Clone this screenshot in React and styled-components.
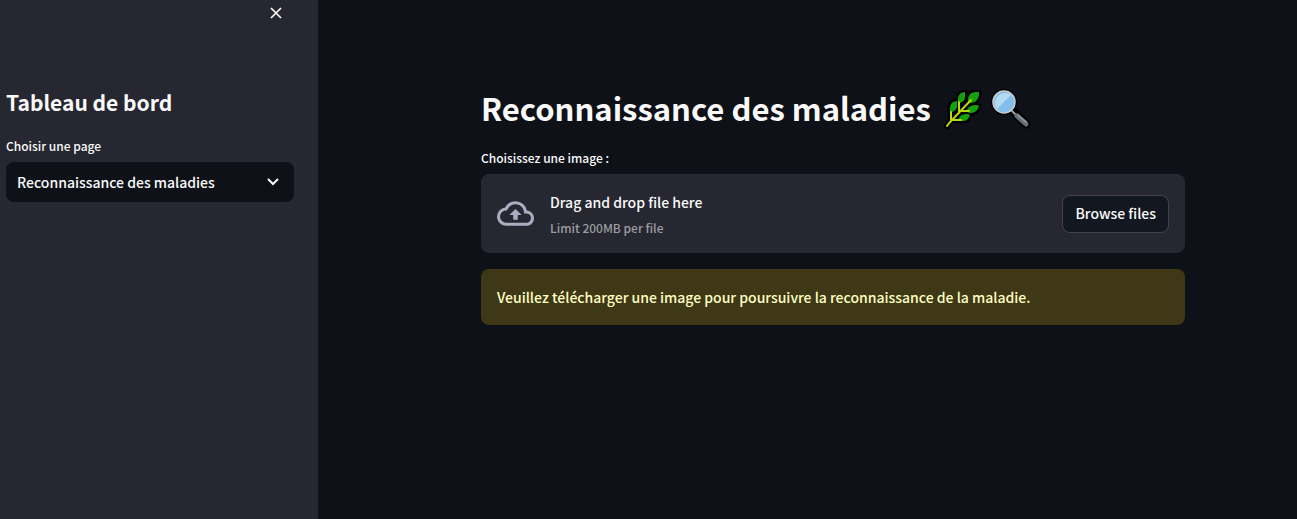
import React from "react";
import styled, { createGlobalStyle } from "styled-components";

const GlobalStyle = createGlobalStyle`
  *, *::before, *::after { box-sizing: border-box; }
  body {
    margin: 0;
    background: #0e1117;
    color: #fafafa;
    font-family: "Source Sans Pro", "Noto Sans CJK SC", "Noto Sans", sans-serif;
    font-size: 14px;
    font-weight: 500;
    line-height: 24px;
  }
  button, select { font: inherit; color: inherit; }
`;

const Layout = styled.div`
  display: flex;
  min-height: 100vh;
`;

const Sidebar = styled.aside`
  flex: 0 0 318px;
  padding: 0 24px 24px 6px;
  background: #262730;
`;

const SidebarHeader = styled.div`
  display: flex;
  justify-content: flex-end;
  height: 88px;
  padding-right: 8px;
`;

const CloseButton = styled.button`
  display: flex;
  align-items: center;
  justify-content: center;
  width: 20px;
  height: 26px;
  padding: 0;
  border: 0;
  background: transparent;
  cursor: pointer;
`;

const SidebarTitle = styled.h2`
  margin: 0 0 18px;
  font-size: 21px;
  line-height: 28px;
  font-weight: 700;
`;

const Label = styled.label`
  display: block;
  margin-bottom: 4px;
  font-size: 12px;
  line-height: 24px;
`;

const SelectBox = styled.div`
  position: relative;
`;

const Select = styled.select`
  display: block;
  width: 100%;
  height: 40px;
  padding: 0 40px 0 11px;
  border: 0;
  border-radius: 8px;
  background: #0e1117;
  appearance: none;
  cursor: pointer;
`;

const Chevron = styled.svg`
  position: absolute;
  right: 15px;
  top: 14px;
  pointer-events: none;
`;

const Main = styled.main`
  flex: 1;
  min-width: 0;
  padding: 84px 0 24px 51px;
`;

const Content = styled.div`
  max-width: 704px;
  margin: 0 auto;
`;

const Title = styled.h1`
  display: flex;
  align-items: center;
  gap: 6px;
  margin: 0 0 14px;
  font-size: 31px;
  line-height: 48px;
  font-weight: 700;
`;

const TitleText = styled.span`
  margin-right: 6px;
`;

const Dropzone = styled.section`
  display: flex;
  align-items: center;
  padding: 16px;
  margin-bottom: 16px;
  border-radius: 8px;
  background: #262730;
`;

const CloudIcon = styled.svg`
  flex: none;
  margin-right: 16px;
  fill: #a9aec1;
`;

const Instructions = styled.div`
  flex: 1;
`;

const Prompt = styled.div`
  line-height: 24px;
`;

const Limit = styled.div`
  padding-top: 5px;
  font-size: 12px;
  line-height: 18px;
  color: #9c9da1;
`;

const BrowseButton = styled.button`
  height: 38px;
  padding: 0 12px 2px;
  border: 1px solid #41434b;
  border-radius: 8px;
  background: #131720;
  cursor: pointer;
`;

const Warning = styled.div`
  padding: 16px;
  border-radius: 8px;
  background: #3e3816;
  color: #ffffc2;
`;

function Herb() {
  const leaves =
    "M36 6v3q-1 7-8 8h-3v-4q1-7 8-7ZM22 6v6q-1 4-5 5h-2v-5q1-6 7-6ZM14 15v6q-1 4-5 5H7v-5q1-6 7-6ZM36 20q-2 7-8 7-3 0-5-2 3-6 9-6 3 0 4 1ZM27 29q-2 6-7 6-4 0-5-1 2-6 8-6 3 0 4 1Z";
  const stem = "M4 40Q6 37 9 34L28 14M8 34V26M16 26V16M17 25H26M9 34H18";
  return (
    <svg width="40" height="44" viewBox="0 0 40 44" role="img" aria-label="Herbe">
      <g stroke="#000" strokeLinejoin="round" strokeLinecap="round" fill="#000">
        <path d={stem} strokeWidth="6" fill="none" />
        <path d={leaves} strokeWidth="5" />
      </g>
      <path d={leaves} fill="#13a10e" />
      <path d={stem} fill="none" stroke="#bad80a" strokeWidth="2" strokeLinecap="round" />
    </svg>
  );
}

function Magnifier() {
  return (
    <svg width="44" height="44" viewBox="0 0 44 44" role="img" aria-label="Loupe">
      <circle cx="15" cy="16" r="13" fill="#000" />
      <path d="m24 25 13 13" stroke="#000" strokeWidth="9" strokeLinecap="round" />
      <path d="m22 24 6 6" stroke="#9aa1a5" strokeWidth="2" />
      <path d="m28 30 9 8" stroke="#636e75" strokeWidth="5" strokeLinecap="round" />
      <path d="m29 29 8 7" stroke="#8b969c" strokeWidth="2" strokeLinecap="round" />
      <circle cx="15" cy="16" r="11" fill="#83beec" stroke="#cccccc" strokeWidth="1.5" />
      <path d="M8 23A10 10 0 0 1 22 9Z" fill="#b4daf2" />
    </svg>
  );
}

export default function App() {
  return (
    <>
      <GlobalStyle />
      <Layout>
        <Sidebar>
          <SidebarHeader>
            <CloseButton type="button" aria-label="Fermer">
              <svg width="12" height="12" viewBox="0 0 12 12" fill="none" stroke="currentColor" strokeWidth="1.7">
                <path d="m1 1 10 10M11 1 1 11" />
              </svg>
            </CloseButton>
          </SidebarHeader>
          <SidebarTitle>Tableau de bord</SidebarTitle>
          <Label htmlFor="page">Choisir une page</Label>
          <SelectBox>
            <Select id="page" defaultValue="maladies">
              <option value="maladies">Reconnaissance des maladies</option>
            </Select>
            <Chevron width="12" height="12" viewBox="0 0 12 12" fill="none" stroke="currentColor" strokeWidth="2">
              <path d="m1 3 5 5 5-5" />
            </Chevron>
          </SelectBox>
        </Sidebar>
        <Main>
          <Content>
            <Title>
              <TitleText>Reconnaissance des maladies</TitleText>
              <Herb />
              <Magnifier />
            </Title>
            <Label htmlFor="browse">Choisissez une image :</Label>
            <Dropzone>
              <CloudIcon width="37" height="37" viewBox="0 0 24 24" aria-hidden="true">
                <path d="M19.35 10.04A7.49 7.49 0 0 0 12 4C9.11 4 6.6 5.64 5.35 8.04A5.994 5.994 0 0 0 0 14c0 3.31 2.69 6 6 6h13c2.76 0 5-2.24 5-5 0-2.64-2.05-4.78-4.65-4.96zM19 18H6c-2.21 0-4-1.79-4-4 0-2.05 1.53-3.76 3.56-3.97l1.07-.11.5-.95A5.469 5.469 0 0 1 12 6c2.62 0 4.88 1.86 5.39 4.43l.3 1.5 1.53.11A2.98 2.98 0 0 1 22 15c0 1.65-1.35 3-3 3zM8 13h2.55v3h2.9v-3H16l-4-4z" />
              </CloudIcon>
              <Instructions>
                <Prompt>Drag and drop file here</Prompt>
                <Limit>Limit 200MB per file</Limit>
              </Instructions>
              <BrowseButton id="browse" type="button">Browse files</BrowseButton>
            </Dropzone>
            <Warning role="alert">
              Veuillez télécharger une image pour poursuivre la reconnaissance de la maladie.
            </Warning>
          </Content>
        </Main>
      </Layout>
    </>
  );
}
